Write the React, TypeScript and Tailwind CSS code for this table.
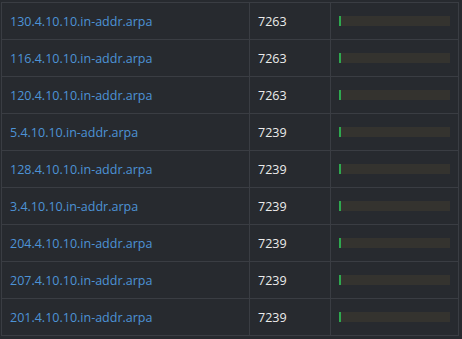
import React from "react";

const rows: [string, number][] = [
  ["130.4.10.10.in-addr.arpa", 7263],
  ["116.4.10.10.in-addr.arpa", 7263],
  ["120.4.10.10.in-addr.arpa", 7263],
  ["5.4.10.10.in-addr.arpa", 7239],
  ["128.4.10.10.in-addr.arpa", 7239],
  ["3.4.10.10.in-addr.arpa", 7239],
  ["204.4.10.10.in-addr.arpa", 7239],
  ["207.4.10.10.in-addr.arpa", 7239],
  ["201.4.10.10.in-addr.arpa", 7239],
];

export default function App() {
  return (
    <div className="w-[462px] h-[339px] bg-[#272a2f] pt-[2px] pl-[1px] overflow-hidden" style={{ fontFamily: '"Open Sans", sans-serif' }}>
      <div className="w-[458px] border-l border-t border-[#3a3d43] grid grid-cols-[248px_81px_128px]">
        {rows.map(([name, n], i) => (
          <React.Fragment key={i}>
            <div className="h-[37px] border-r border-b border-[#3a3d43] pl-2 pt-[3px] flex items-center text-[12.5px] text-[#4d93d6]">{name}</div>
            <div className="h-[37px] border-r border-b border-[#3a3d43] pl-2 pt-[3px] flex items-center text-[12.5px] text-[#ececec]">{n}</div>
            <div className="h-[37px] border-r border-b border-[#3a3d43] px-2 flex items-center">
              <div className="h-[10px] w-full bg-[#34332f] flex">
                <div className="w-[2px] h-full bg-[#2ea84f]" />
              </div>
            </div>
          </React.Fragment>
        ))}
      </div>
    </div>
  );
}
